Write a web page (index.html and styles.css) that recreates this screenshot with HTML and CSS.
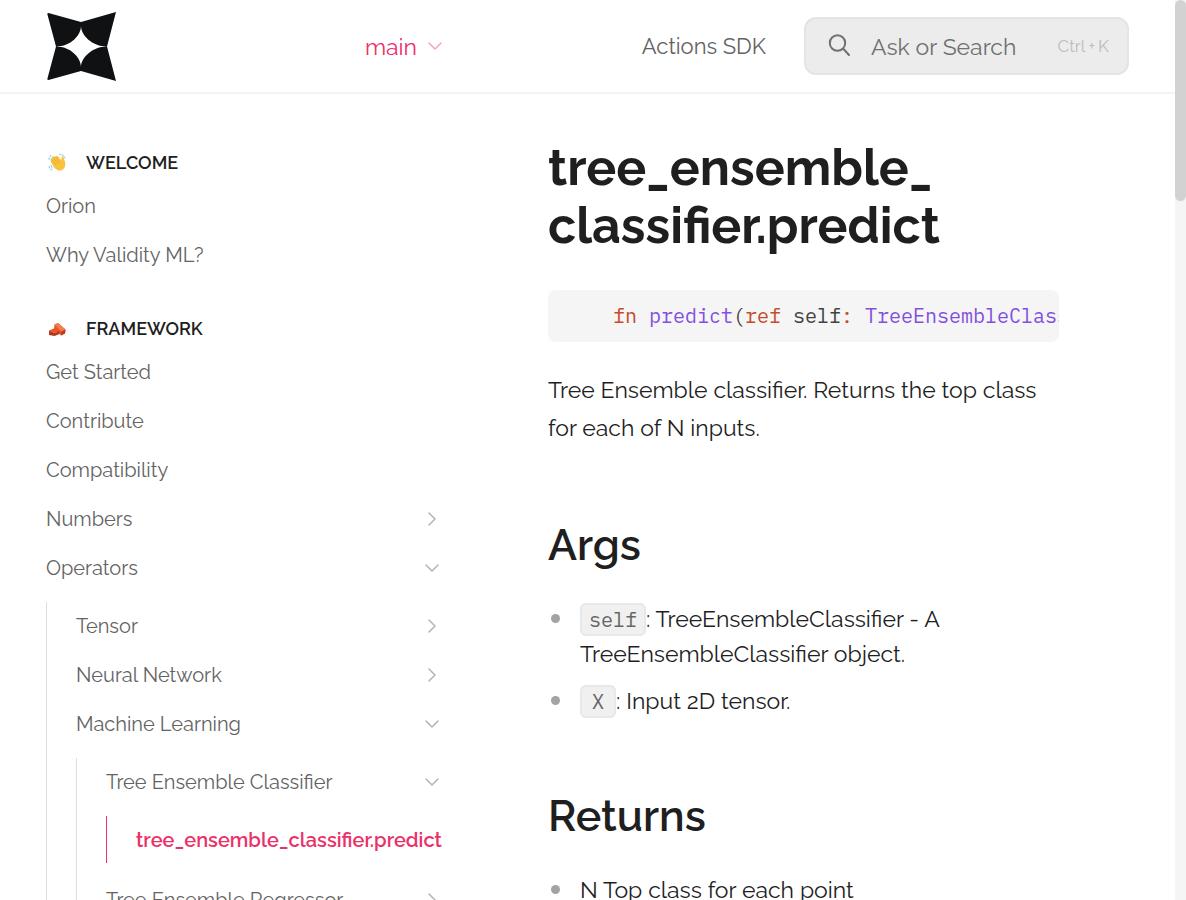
FILE: index.html
```html
<!DOCTYPE html>
<html lang="en">
<head>
<meta charset="utf-8">
<meta name="viewport" content="width=device-width, initial-scale=1">
<title>tree_ensemble_classifier.predict</title>
<link rel="stylesheet" href="styles.css">
</head>
<body>
<svg class="symbols" aria-hidden="true">
  <symbol id="chev-down" viewBox="0 0 16 16"><path d="M2 5l6 6 6-6" fill="none" stroke="currentColor" stroke-width="1.5" stroke-linecap="round" stroke-linejoin="round"/></symbol>
  <symbol id="chev-right" viewBox="0 0 16 16"><path d="M5 2l6 6-6 6" fill="none" stroke="currentColor" stroke-width="1.5" stroke-linecap="round" stroke-linejoin="round"/></symbol>
</svg>
<header class="header">
  <div class="header-left">
    <a class="logo" href="#" aria-label="Home">
      <svg width="70" height="70" viewBox="0 0 70 70"><path fill="#0f1112" d="M1.500 2L34 11V15C34 24 24 35.500 9 35.500L.3 3Q.3 2 1.500 2zM69 1L34 11V15C34 24 45 35.500 60 35.500zM1.500 69L34 60V56C34 47 24 35.500 9 35.500L.3 68Q.3 69 1.500 69zM69 70L34 60V56C34 47 45 35.500 60 35.500z"/></svg>
    </a>
    <button class="variant" type="button">main <svg class="chev"><use href="#chev-down"/></svg></button>
  </div>
  <div class="header-right">
    <a class="header-link" href="#">Actions SDK</a>
    <button class="search" type="button">
      <svg class="search-icon" viewBox="0 0 24 24"><g fill="none" stroke="currentColor" stroke-width="2" stroke-linecap="round"><circle cx="10.500" cy="9" r="7.700"/><path d="M16.300 14.800L22 21"/></g></svg>
      <span class="search-text">Ask or Search</span>
      <span class="search-key">Ctrl<small>+</small>K</span>
    </button>
  </div>
</header>
<div class="layout">
  <nav class="sidebar">
    <section>
      <h2 class="group"><svg class="emoji" viewBox="0 0 18 18"><g fill="none" stroke="#8ccfe6" stroke-width="1.100" stroke-linecap="round" stroke-dasharray="1.500 1.500"><path d="M1 6.500Q1.300 3.500 4 1.800M3 7Q3.500 5 5 4M11.500 1.200Q15.500 1.500 17 5M1 13.500Q1.800 16.300 4.500 17.200M3 12.500Q3.500 14.300 5 15"/></g><path fill="#fbc23d" d="M2.500 8.300Q2.700 6.500 4.100 7.300L3.300 5.800Q3.800 4 5.300 5L5.100 3.800Q6 2.300 7.300 3.700L7.700 3.500Q8.600 2 10 3.400L13.300 7.600 13.600 4.100Q14.500 2.500 15.600 4.100Q15.800 6.500 17 9C18.500 14 14.700 18.600 10.500 17.500Q7.500 16.700 5.500 13.500z"/><path fill="none" stroke="#e8a22a" stroke-width=".7" stroke-linecap="round" d="M4.300 7.500l4 4.600M5.500 5.300l4.500 5.300M7.600 4.200l4.100 5"/></svg>Welcome</h2>
      <ul class="nav">
        <li><a class="item" href="#">Orion</a></li>
        <li><a class="item" href="#">Why Validity ML?</a></li>
      </ul>
    </section>
    <section>
      <h2 class="group"><svg class="emoji" viewBox="0 0 18 18"><path fill="#e9552b" d="M6.500 5.500L10 4l7.500 6.500-.5 4-4 2L6 10z"/><path fill="#f37b4c" d="M6.500 5.500L10 4l7.500 6.500-4.200 2z"/><path fill="#c13c1f" d="M13.300 12.500l4.200-2-.5 4-4 2z"/><path fill="#e9552b" d="M1 11.500l5-2 5.500 2.500-5 2z"/><path fill="#b5371c" d="M1 11.500l5.500 2.500v3L1 16zM6.500 14l5-2v3l-5 2z"/></svg>Framework</h2>
      <ul class="nav">
        <li><a class="item" href="#">Get Started</a></li>
        <li><a class="item" href="#">Contribute</a></li>
        <li><a class="item" href="#">Compatibility</a></li>
        <li><a class="item" href="#">Numbers<svg class="chev"><use href="#chev-right"/></svg></a></li>
        <li><a class="item" href="#">Operators<svg class="chev"><use href="#chev-down"/></svg></a>
          <ul class="nav nested">
            <li><a class="item" href="#">Tensor<svg class="chev"><use href="#chev-right"/></svg></a></li>
            <li><a class="item" href="#">Neural Network<svg class="chev"><use href="#chev-right"/></svg></a></li>
            <li><a class="item" href="#">Machine Learning<svg class="chev"><use href="#chev-down"/></svg></a>
              <ul class="nav nested">
                <li><a class="item" href="#">Tree Ensemble Classifier<svg class="chev"><use href="#chev-down"/></svg></a>
                  <ul class="nav nested current">
                    <li><a class="item active" href="#" aria-current="page">tree_ensemble_classifier.predict</a></li>
                  </ul>
                </li>
                <li><a class="item" href="#">Tree Ensemble Regressor<svg class="chev"><use href="#chev-right"/></svg></a></li>
              </ul>
            </li>
          </ul>
        </li>
      </ul>
    </section>
  </nav>
  <main class="content">
    <h1>tree_ensemble_<wbr>classifier.predict</h1>
    <pre class="code"><code>    <span class="kw">fn</span> <span class="fn">predict</span>(<span class="kw">ref</span> self<span class="kw">:</span> <span class="fn">TreeEnsembleClassifier</span></code></pre>
    <p>Tree Ensemble classifier. Returns the top class for each of N inputs.</p>
    <h2>Args</h2>
    <ul class="list">
      <li><code class="chip">self</code>: TreeEnsembleClassifier - A TreeEnsembleClassifier object.</li>
      <li><code class="chip chip-short">X</code>: Input 2D tensor.</li>
    </ul>
    <h2>Returns</h2>
    <ul class="list">
      <li>N Top class for each point</li>
    </ul>
  </main>
</div>
<div class="scrollbar" aria-hidden="true"><div class="thumb"></div></div>
</body>
</html>
```
FILE: styles.css
```css
* { box-sizing: border-box; }
html, body { height: 100%; }
body {
  margin: 0;
  padding-right: 11px;
  overflow: hidden;
  background: #fff;
  color: #1f1f1f;
  font-family: Raleway, Lato, sans-serif;
  font-variant-numeric: oldstyle-nums;
}
a { color: inherit; text-decoration: none; }
button { font: inherit; border: 0; background: none; padding: 0; cursor: pointer; }
ul { list-style: none; margin: 0; padding: 0; }
.symbols { display: none; }
.chev { width: 16px; height: 16px; flex: none; }

.header {
  display: flex;
  align-items: center;
  justify-content: space-between;
  height: 94px;
  padding: 0 46px 0 47px;
  border-bottom: 2px solid #f3f3f3;
  color: #636363;
  font-size: 23px;
}
.header-left { display: flex; align-items: center; justify-content: space-between; width: 396px; }
.logo, .logo svg { display: block; }
.variant { display: flex; align-items: center; gap: 10px; color: #eb3169; }
.variant .chev { color: #f6a3bf; }
.header-right { display: flex; align-items: center; gap: 38px; }
.header-link { font-size: 22px; }
.search {
  display: flex;
  align-items: center;
  width: 325px;
  height: 58px;
  padding: 0 18px 0 21px;
  border: 2px solid #e4e4e4;
  border-radius: 12px;
  background: #ececec;
  color: #707070;
}
.search-icon { width: 24px; height: 24px; margin-right: 20px; }
.search-key { margin-left: auto; color: #bcbcbc; font-size: 17px; }
.search-key small { font-size: 16px; margin: 0 3px; }

.layout { display: flex; gap: 101px; padding: 0 116px 0 46px; }
.sidebar { flex: 0 0 401px; min-width: 0; display: flex; flex-direction: column; gap: 30px; padding-top: 48px; }
.group {
  display: flex;
  align-items: center;
  gap: 20px;
  height: 40px;
  margin: 0;
  padding-left: 2px;
  font-size: 18px;
  font-weight: 600;
  text-transform: uppercase;
}
.emoji { width: 18px; height: 18px; }
.nav { display: flex; flex-direction: column; gap: 2px; }
.nested { margin: 11px 0; padding-left: 29px; border-left: 1px solid #dedede; }
.current { border-color: #eb3169; }
.item {
  display: flex;
  align-items: center;
  justify-content: space-between;
  height: 47px;
  padding-right: 7px;
  color: #636363;
  font-size: 20px;
  white-space: nowrap;
}
.item .chev { color: #b3b3b3; }
.active { padding-right: 0; color: #eb3169; font-weight: 600; }

.content { flex: 1; min-width: 0; padding-top: 45px; font-size: 23px; }
h1 { margin: 0; font-size: 50px; font-weight: 700; line-height: 58px; }
.code {
  margin: 35px 0 29px;
  padding: 12px 17px;
  overflow: hidden;
  border-radius: 8px;
  background: #f5f5f5;
  color: #424242;
  line-height: 28px;
}
.code code { display: block; height: 28px; }
code { font-family: "IBM Plex Mono", "Liberation Mono", monospace; font-size: 20px; }
.kw { color: #c64a2c; }
.fn { color: #8250df; }
.content p { margin: 0; line-height: 38px; }
.content h2 { margin: 70px 0 28px; font-size: 43px; font-weight: 600; line-height: 56px; }
.list { display: flex; flex-direction: column; gap: 12px; }
.list li { position: relative; padding-left: 32px; line-height: 35px; }
.list li::before {
  content: "";
  position: absolute;
  left: 3px;
  top: 13px;
  width: 9px;
  height: 9px;
  border-radius: 50%;
  background: #a3a3a3;
}
.chip {
  padding: 1px 7px;
  border: 2px solid #e8e8e8;
  border-radius: 6px;
  background: #f0f0f0;
  color: #666;
  line-height: 28px;
}
.chip-short { padding: 1px 10px; }

.scrollbar { position: fixed; top: 0; right: 0; bottom: 0; width: 11px; background: #f5f5f5; }
.thumb { height: 201px; border-radius: 6px; background: #d2d2d2; }
```
